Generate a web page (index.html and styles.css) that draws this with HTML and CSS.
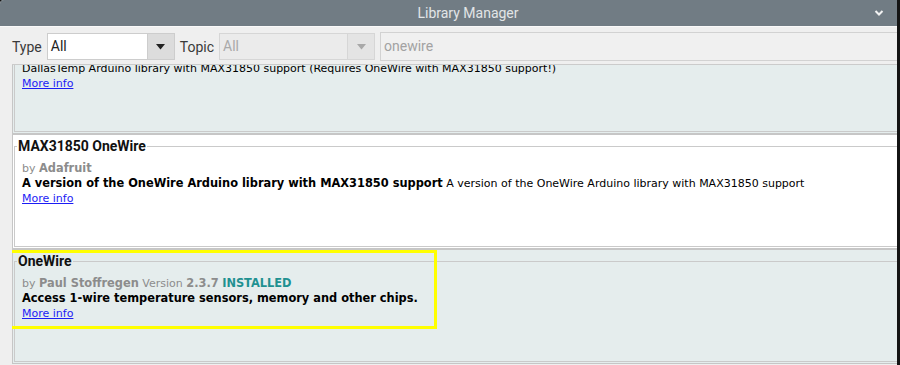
FILE: index.html
```html
<!DOCTYPE html>
<html lang="en">
<head>
    <meta charset="UTF-8">
    <title>Library Manager</title>
    <link rel="stylesheet" href="styles.css">
</head>
<body>

<div class="window">
    <div class="titlebar">
        <span class="title">Library Manager</span>
        <span class="window-buttons">
            <svg width="10" height="8" viewBox="0 0 10 8"><polyline points="1.5,2 5,5.5 8.5,2" fill="none" stroke="#f2f2f2" stroke-width="2"/></svg>
        </span>
    </div>

    <div class="toolbar">
        <label class="filter-label">Type</label>
        <div class="combo combo-type">
            <span class="combo-value">All</span>
            <span class="combo-button"><svg width="9" height="6" viewBox="0 0 9 6"><polygon points="0,0 9,0 4.5,5.5" fill="#222"/></svg></span>
        </div>
        <label class="filter-label">Topic</label>
        <div class="combo combo-topic combo-disabled">
            <span class="combo-value">All</span>
            <span class="combo-button"><svg width="9" height="6" viewBox="0 0 9 6"><polygon points="0,0 9,0 4.5,5.5" fill="#a8a8a8"/></svg></span>
        </div>
        <div class="search">onewire</div>
    </div>

    <div class="list">
        <!-- первый элемент прокручен вверх -->
        <div class="entry entry-alt entry-first">
            <fieldset>
                <legend>MAX31850 DallasTemp</legend>
                <div class="meta">by <b>Adafruit</b></div>
                <div class="desc">DallasTemp Arduino library with MAX31850 support (Requires OneWire with MAX31850 support!)</div>
                <a class="more" href="#">More info</a>
            </fieldset>
        </div>

        <div class="entry">
            <fieldset>
                <legend>MAX31850 OneWire</legend>
                <div class="meta">by <b>Adafruit</b></div>
                <div class="desc"><b>A version of the OneWire Arduino library with MAX31850 support</b> A version of the OneWire Arduino library with MAX31850 support</div>
                <a class="more" href="#">More info</a>
            </fieldset>
        </div>

        <div class="entry entry-alt">
            <fieldset>
                <legend>OneWire</legend>
                <div class="meta">by <b>Paul Stoffregen</b> Version <b>2.3.7</b> <b class="installed">INSTALLED</b></div>
                <div class="desc"><b>Access 1-wire temperature sensors, memory and other chips.</b></div>
                <a class="more" href="#">More info</a>
            </fieldset>
            <div class="highlight"></div>
        </div>
    </div>
</div>

</body>
</html>
```

FILE: styles.css
```css
body {
    margin: 0;
    height: 365px;
    overflow: hidden;
    display: flex;
    background: #141414;
    font-family: "DejaVu Sans", sans-serif;
    font-size: 11px;
}

.window {
    width: 897px;
    display: flex;
    flex-direction: column;
    background: #efefef;
    border-top-left-radius: 4px;
    overflow: hidden;
}

/* Заголовок окна */
.titlebar {
    height: 26px;
    flex-shrink: 0;
    display: flex;
    align-items: center;
    padding-left: 66px;
    background: #717c84;
    color: #e2e5e7;
    font-family: Roboto, sans-serif;
    font-size: 14px;
}

.title {
    flex: 1;
    text-align: center;
}

.window-buttons {
    width: 27px;
    padding-left: 4px;
    box-sizing: border-box;
    display: flex;
    align-items: center;
}

/* Панель фильтров */
.toolbar {
    flex-shrink: 0;
    display: flex;
    align-items: center;
    gap: 5px;
    padding: 5px 0 3px 12px;
    border-top: 1px solid #f9f9f9;
    font-family: Roboto, sans-serif;
    font-size: 14px;
}

.filter-label {
    color: #3a3a3a;
}

.combo {
    height: 27px;
    box-sizing: border-box;
    display: flex;
    border: 1px solid #cdcdcd;
    background: #fff;
    color: #222;
}

.combo-type {
    width: 128px;
}

.combo-topic {
    width: 156px;
}

.combo-value {
    flex: 1;
    padding-left: 3px;
    line-height: 25px;
}

.combo-button {
    width: 26px;
    display: flex;
    align-items: center;
    justify-content: center;
    border-left: 1px solid #cdcdcd;
    background: #dcdcdc;
}

.combo-disabled {
    background: #ebebeb;
    border-color: #d6d6d6;
    color: #a9a9a9;
}

.combo-disabled .combo-button {
    background: #e4e4e4;
    border-left-color: #d6d6d6;
}

.search {
    flex: 1;
    height: 29px;
    box-sizing: border-box;
    padding-left: 3px;
    line-height: 27px;
    border: 1px solid #d2d2d2;
    border-right: none;
    background: #f0f0f0;
    color: #a2a2a2;
}

/* Список библиотек */
.list {
    flex: 1;
    margin-left: 12px;
    overflow: hidden;
    border-top: 1px solid #cbcbcb;
}

.entry {
    position: relative;
    height: 115px;
    box-sizing: border-box;
    padding: 3px 0 1px 1px;
    border: 1px solid #c6c6c6;
    border-right: none;
    background: #fff;
}

.entry-alt {
    background: #e5eded;
}

.entry-first {
    margin-top: -46px;
}

.entry fieldset {
    height: 100%;
    box-sizing: border-box;
    margin: 0;
    padding: 0 0 0 7px;
    border: 1px solid #cacaca;
    border-right: none;
}

.entry legend {
    margin-left: -5px;
    padding: 0 1px;
    font-family: Roboto, sans-serif;
    font-size: 14px;
    font-weight: bold;
    line-height: 16px;
    color: #111;
}

.entry b {
    font-size: 11.4px;
}

.meta {
    margin-top: 7px;
    line-height: 15px;
    color: #8c8c8c;
}

.installed {
    color: #1f9191;
}

.desc {
    line-height: 15px;
    color: #000;
    white-space: nowrap;
}

.more {
    display: inline-block;
    line-height: 15px;
    color: #1c1cf5;
}

/* Жёлтая рамка поверх выбранной библиотеки */
.highlight {
    position: absolute;
    left: -4px;
    top: 0;
    width: 428px;
    height: 79px;
    box-sizing: border-box;
    border: 3px solid #ffff00;
}
```
